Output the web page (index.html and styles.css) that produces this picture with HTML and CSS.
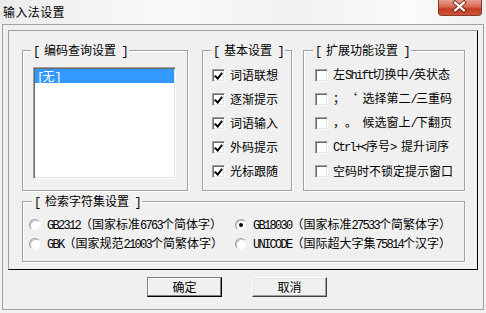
FILE: index.html
```html
<!DOCTYPE html>
<html lang="zh-CN">
<head>
<meta charset="utf-8">
<title>输入法设置</title>
<link rel="stylesheet" href="styles.css">
</head>
<body>
<div class="titlebar">
  <span class="title-text">输入法设置</span>
  <div class="close">
    <svg width="44" height="16" viewBox="0 0 44 16">
      <path d="M17.5 3.5 L26.5 11.5 M26.5 3.5 L17.5 11.5" stroke="#6b2318" stroke-width="4" stroke-linecap="square" fill="none"/>
      <path d="M17.5 3.5 L26.5 11.5 M26.5 3.5 L17.5 11.5" stroke="#fff" stroke-width="2.2" stroke-linecap="square" fill="none"/>
    </svg>
  </div>
</div>
<div class="frame">
  <div class="panel">
    <div class="top-row">
      <div class="group g1">
        <span class="legend"><span class="h">[ </span>编码查询设置<span class="h"> ]</span></span>
        <div class="listbox">
          <div class="item selected"><span class="h">[</span>无<span class="h">]</span></div>
        </div>
      </div>
      <div class="group g2">
        <span class="legend"><span class="h">[ </span>基本设置<span class="h"> ]</span></span>
        <div class="check-row"><span class="check on"></span><span>词语联想</span></div>
        <div class="check-row"><span class="check on"></span><span>逐渐提示</span></div>
        <div class="check-row"><span class="check on"></span><span>词语输入</span></div>
        <div class="check-row"><span class="check on"></span><span>外码提示</span></div>
        <div class="check-row"><span class="check on"></span><span>光标跟随</span></div>
      </div>
      <div class="group g3">
        <span class="legend"><span class="h">[ </span>扩展功能设置<span class="h"> ]</span></span>
        <div class="check-row"><span class="check"></span><span>左<span class="h">Shift</span>切换中<span class="h">/</span>英状态</span></div>
        <div class="check-row"><span class="check"></span><span><span class="fw">；</span><span class="fw">‘</span><span class="h"> </span>选择第二<span class="h">/</span>三重码</span></div>
        <div class="check-row"><span class="check"></span><span><span class="fw">，</span><span class="fw">。</span><span class="h"> </span>候选窗上<span class="h">/</span>下翻页</span></div>
        <div class="check-row"><span class="check"></span><span><span class="h">Ctrl+&lt;</span>序号<span class="h">&gt; </span>提升词序</span></div>
        <div class="check-row"><span class="check"></span><span>空码时不锁定提示窗口</span></div>
      </div>
    </div>
    <div class="group g4">
      <span class="legend"><span class="h">[ </span>检索字符集设置<span class="h"> ]</span></span>
      <div class="radio-grid">
        <div class="radio-row"><span class="radio"></span><span><span class="h">GB2312</span>（国家标准<span class="h">6763</span>个简体字）</span></div>
        <div class="radio-row"><span class="radio on"></span><span><span class="h">GB18030</span>（国家标准<span class="h">27533</span>个简繁体字）</span></div>
        <div class="radio-row"><span class="radio"></span><span><span class="h">GBK</span>（国家规范<span class="h">21003</span>个简繁体字）</span></div>
        <div class="radio-row"><span class="radio"></span><span><span class="h">UNICODE</span>（国际超大字集<span class="h">75814</span>个汉字）</span></div>
      </div>
    </div>
  </div>
  <div class="buttons">
    <div class="btn default">确定</div>
    <div class="btn">取消</div>
  </div>
</div>
</body>
</html>
```
FILE: styles.css
```css
* { box-sizing: border-box; }
html, body { margin: 0; padding: 0; }
body {
  width: 486px;
  height: 313px;
  overflow: hidden;
  background: #f2f2f2;
  font-family: "Noto Sans CJK SC", sans-serif;
  font-size: 12px;
  color: #000;
}
.h {
  font-family: "Liberation Mono", monospace;
  font-size: 12px;
  letter-spacing: -1.7px;
  white-space: pre;
}
.fw {
  display: inline-block;
  width: 12px;
  text-align: center;
}
.titlebar {
  height: 24px;
  display: flex;
  justify-content: space-between;
  align-items: flex-start;
  background: linear-gradient(90deg, #ececec 0%, #fafafa 35%, #f1f1f1 60%, #fbfbfb 85%, #eeeeee 100%);
}
.title-text {
  margin: 4px 0 0 3px;
  font-size: 12px;
  line-height: 16px;
  letter-spacing: 0.4px;
}
.close {
  width: 44px;
  height: 16px;
  margin-right: 4px;
  border: 1px solid #8a3a2c;
  border-top: none;
  border-radius: 0 0 4px 4px;
  background: linear-gradient(#e8a08f 0%, #d9674f 45%, #c23b22 60%, #d0553a 100%);
  display: flex;
}
.close svg { display: block; margin: -1px 0 0 -1px; }
.frame {
  margin: 0 2px;
  width: 482px;
  height: 286px;
  border: 1px solid #a0a0a0;
  background: #f0f0f0;
  padding: 5px;
}
.panel {
  width: 470px;
  height: 240px;
  border: 1px solid;
  border-color: #a0a0a0 #000 #000 #a0a0a0;
  padding: 19px 0 0 13px;
}
.top-row {
  display: flex;
  align-items: flex-start;
}
.group {
  position: relative;
  border: 1px solid #a0a0a0;
  box-shadow: inset 1px 1px 0 #fff, 1px 1px 0 #fff;
}
.legend {
  position: absolute;
  top: -9px;
  left: 8px;
  padding: 0 2px;
  background: #f0f0f0;
  line-height: 16px;
  white-space: nowrap;
}
.g1 { width: 166px; height: 141px; padding: 16px 0 0 10px; margin-right: 14px; }
.g2 { width: 90px; height: 141px; padding: 12px 0 0 9px; margin-right: 11px; }
.g3 { width: 162px; height: 141px; padding: 12px 0 0 11px; }
.g3 .legend { left: 9px; }
.g4 { width: 443px; height: 61px; margin-top: 10px; padding: 13px 0 0 6px; }
.g4 .legend { left: 9px; }
.listbox {
  width: 143px;
  height: 112px;
  background: #fff;
  border: 1px solid;
  border-color: #a0a0a0 #fff #fff #a0a0a0;
  box-shadow: inset 1px 1px 0 #696969, inset -1px -1px 0 #e3e3e3;
  padding: 1px;
}
.item {
  height: 14px;
  line-height: 14px;
  padding-left: 2px;
  white-space: nowrap;
}
.item.selected {
  background: #3399ff;
  color: #fff;
}
.check-row {
  height: 24px;
  display: flex;
  align-items: center;
  gap: 5px;
  white-space: nowrap;
  line-height: 16px;
}
.check {
  flex: none;
  width: 13px;
  height: 13px;
  background: #fff;
  border: 1px solid;
  border-color: #a0a0a0 #fff #fff #a0a0a0;
  box-shadow: inset 1px 1px 0 #696969, inset -1px -1px 0 #e3e3e3;
  position: relative;
}
.check.on::after {
  content: "";
  position: absolute;
  left: 3px;
  top: 1px;
  width: 3px;
  height: 6px;
  border: solid #000;
  border-width: 0 2px 2px 0;
  transform: rotate(40deg);
}
.radio-grid {
  display: grid;
  grid-template-columns: 206px 206px;
}
.radio-row {
  height: 19px;
  display: flex;
  align-items: center;
  gap: 6px;
  white-space: nowrap;
  line-height: 16px;
}
.radio {
  flex: none;
  width: 12px;
  height: 12px;
  border-radius: 50%;
  background: #fff;
  border: 1px solid;
  border-color: #a0a0a0 #f4f4f4 #f4f4f4 #a0a0a0;
  box-shadow: inset 1px 1px 0 #c8c8c8;
  position: relative;
}
.radio.on::after {
  content: "";
  position: absolute;
  left: 3px;
  top: 3px;
  width: 4px;
  height: 4px;
  border-radius: 50%;
  background: #000;
}
.buttons {
  display: flex;
  gap: 30px;
  padding: 7px 0 0 139px;
}
.btn {
  width: 75px;
  height: 20px;
  line-height: 18px;
  text-align: center;
  background: #f0f0f0;
  border: 1px solid;
  border-color: #fff #404040 #404040 #fff;
  box-shadow: inset -1px -1px 0 #a0a0a0, inset 1px 1px 0 #e3e3e3;
}
.btn.default {
  border-color: #808080 #000 #000 #808080;
  box-shadow: inset -1px -1px 0 #808080, inset 1px 1px 0 #fff;
}
```
